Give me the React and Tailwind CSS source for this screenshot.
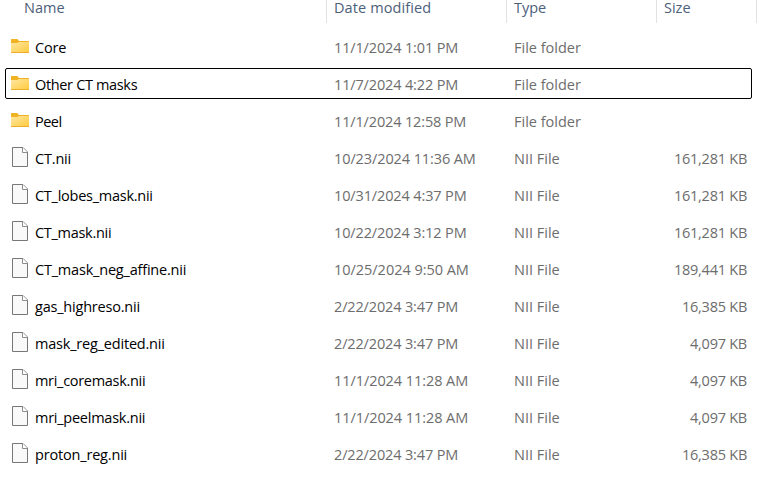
const rows = [
  { name: "Core", track: "tracking-[-0.2px]", date: "11/1/2024 1:01 PM", dateTrack: "tracking-[-0.15px]", folder: true },
  { name: "Other CT masks", track: "tracking-[-0.34px]", date: "11/7/2024 4:22 PM", dateTrack: "tracking-[-0.15px]", folder: true, focused: true },
  { name: "Peel", track: "tracking-[-0.5px]", date: "11/1/2024 12:58 PM", dateTrack: "tracking-[-0.15px]", folder: true },
  { name: "CT.nii", track: "tracking-[-0.18px]", date: "10/23/2024 11:36 AM", dateTrack: "tracking-[-0.1px]", size: "161,281 KB" },
  { name: "CT_lobes_mask.nii", track: "tracking-[-0.26px]", date: "10/31/2024 4:37 PM", dateTrack: "tracking-[-0.13px]", size: "161,281 KB" },
  { name: "CT_mask.nii", track: "tracking-[-0.29px]", date: "10/22/2024 3:12 PM", dateTrack: "tracking-[-0.13px]", size: "161,281 KB" },
  { name: "CT_mask_neg_affine.nii", track: "tracking-[-0.2px]", date: "10/25/2024 9:50 AM", dateTrack: "tracking-[-0.03px]", size: "189,441 KB" },
  { name: "gas_highreso.nii", track: "tracking-[-0.21px]", date: "2/22/2024 3:47 PM", dateTrack: "tracking-[-0.15px]", size: "16,385 KB" },
  { name: "mask_reg_edited.nii", track: "tracking-[-0.2px]", date: "2/22/2024 3:47 PM", dateTrack: "tracking-[-0.15px]", size: "4,097 KB" },
  { name: "mri_coremask.nii", track: "tracking-[-0.3px]", date: "11/1/2024 11:28 AM", dateTrack: "tracking-[-0.07px]", size: "4,097 KB" },
  { name: "mri_peelmask.nii", track: "tracking-[-0.25px]", date: "11/1/2024 11:28 AM", dateTrack: "tracking-[-0.07px]", size: "4,097 KB" },
  { name: "proton_reg.nii", track: "tracking-[-0.18px]", date: "2/22/2024 3:47 PM", dateTrack: "tracking-[-0.15px]", size: "16,385 KB" },
];

function FolderIcon() {
  return (
    <svg width="18" height="14" viewBox="0 0 18 14" className="shrink-0">
      <defs>
        <linearGradient id="folder" x1="0" y1="0" x2="1" y2="1">
          <stop offset="0" stopColor="#ffe7a2" />
          <stop offset="1" stopColor="#ffca3c" />
        </linearGradient>
      </defs>
      <path d="M0 .6Q0 0 .6 0H6.3L8 2H17.5Q18 2 18 2.5V8H0Z" fill="#f0b323" />
      <path d="M0 4H6.2L8 3H18V13.5Q18 14 17.5 14H.5Q0 14 0 13.5Z" fill="url(#folder)" />
      <path d="M0 13.5H18" stroke="#eeae2b" strokeWidth="1" />
    </svg>
  );
}

function FileIcon() {
  return (
    <svg width="16" height="20" viewBox="0 0 16 20" className="shrink-0">
      <path d="M.5 .5H11L15.5 5V19.5H.5Z" fill="#f9f9f9" stroke="#777" />
      <path d="M10.5 .5V5.5H15.5" fill="#fff" stroke="#808080" strokeWidth=".9" />
    </svg>
  );
}

export default function App() {
  return (
    <div className="h-[477px] w-[768px] overflow-hidden bg-white font-['Open_Sans','Noto_Sans',sans-serif] text-[14.5px] leading-[20px] whitespace-nowrap text-[#6d6d6d]">
      <div className="flex h-[23px] leading-[16px] text-[#4c607a]">
        <div className="w-[327px] border-r border-[#e2e2e2] pl-6">Name</div>
        <div className="w-[180px] border-r border-[#e2e2e2] pl-[7px] tracking-[0.1px]">Date modified</div>
        <div className="w-[150px] border-r border-[#e2e2e2] pl-[7px]">Type</div>
        <div className="w-[100px] border-r border-[#e2e2e2] pl-[7px]">Size</div>
      </div>
      <div className="mt-2 ml-[5px] flex w-[747px] flex-col gap-[6px]">
        {rows.map((row) => (
          <div
            key={row.name}
            className={`flex h-[31px] items-start rounded-[2px] border pt-[6px] ${row.focused ? "border-black" : "border-transparent"}`}
          >
            <div className="flex w-[328px] items-start pl-[5px] text-black">
              <div className="w-6 shrink-0">
                {row.folder ? <div className="pt-px"><FolderIcon /></div> : <div className="-mt-0.5 pl-px"><FileIcon /></div>}
              </div>
              <span className={row.track}>{row.name}</span>
            </div>
            <div className="w-[180px]"><span className={row.dateTrack}>{row.date}</span></div>
            <div className="w-[130px]"><span>{row.folder ? "File folder" : "NII File"}</span></div>
            <div className="flex-1 pr-1 text-right"><span className="tracking-[-0.25px]">{row.size}</span></div>
          </div>
        ))}
      </div>
    </div>
  );
}
